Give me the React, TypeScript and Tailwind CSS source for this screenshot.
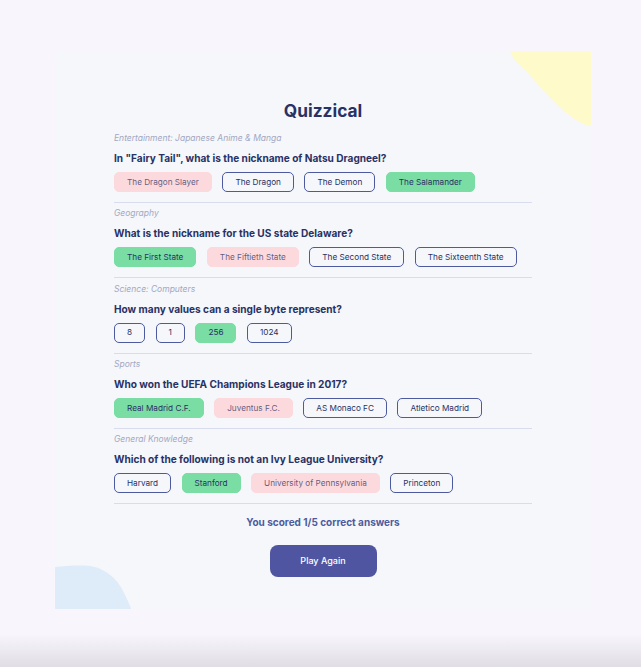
type AnswerState = "correct" | "wrong" | "idle";

type Answer = {
  text: string;
  state: AnswerState;
};

type Question = {
  category: string;
  question: string;
  answers: Answer[];
};

const questions: Question[] = [
  {
    category: "Entertainment: Japanese Anime & Manga",
    question: 'In "Fairy Tail", what is the nickname of Natsu Dragneel?',
    answers: [
      { text: "The Dragon Slayer", state: "wrong" },
      { text: "The Dragon", state: "idle" },
      { text: "The Demon", state: "idle" },
      { text: "The Salamander", state: "correct" },
    ],
  },
  {
    category: "Geography",
    question: "What is the nickname for the US state Delaware?",
    answers: [
      { text: "The First State", state: "correct" },
      { text: "The Fiftieth State", state: "wrong" },
      { text: "The Second State", state: "idle" },
      { text: "The Sixteenth State", state: "idle" },
    ],
  },
  {
    category: "Science: Computers",
    question: "How many values can a single byte represent?",
    answers: [
      { text: "8", state: "idle" },
      { text: "1", state: "idle" },
      { text: "256", state: "correct" },
      { text: "1024", state: "idle" },
    ],
  },
  {
    category: "Sports",
    question: "Who won the UEFA Champions League in 2017?",
    answers: [
      { text: "Real Madrid C.F.", state: "correct" },
      { text: "Juventus F.C.", state: "wrong" },
      { text: "AS Monaco FC", state: "idle" },
      { text: "Atletico Madrid", state: "idle" },
    ],
  },
  {
    category: "General Knowledge",
    question: "Which of the following is not an Ivy League University?",
    answers: [
      { text: "Harvard", state: "idle" },
      { text: "Stanford", state: "correct" },
      { text: "University of Pennsylvania", state: "wrong" },
      { text: "Princeton", state: "idle" },
    ],
  },
];

const answerStyles: Record<AnswerState, string> = {
  correct: "bg-[#79dda4] border-[#79dda4] text-[#293264]",
  wrong: "bg-[#fbd9dc] border-[#fbd9dc] text-[#293264]/75",
  idle: "bg-transparent border-[#4d5b9e] text-[#293264]",
};

function QuestionBlock({ item }: { item: Question }) {
  return (
    <div className="flex flex-col pt-[4.25px]">
      <p className="text-[8.5px] leading-[12px] italic text-[#a3a7c2]">{item.category}</p>
      <h2 className="mt-[7px] text-[10.1px] leading-[14px] font-bold text-[#293264]">
        {item.question}
      </h2>
      <div className="mt-[7px] flex gap-[10.5px]">
        {item.answers.map((a) => (
          <button
            key={a.text}
            className={`h-[20px] rounded-[5px] border px-[12px] text-[8.2px] leading-none ${answerStyles[a.state]}`}
          >
            {a.text}
          </button>
        ))}
      </div>
      <div className="mt-[10px] h-px bg-[#d9dcef]" />
    </div>
  );
}

export default function App() {
  return (
    <div
      className="h-[667px] w-full bg-[linear-gradient(to_bottom,#f8f6fc_0%,#f8f6fc_95%,#e0dde5_100%)] pt-[51px] pl-[55px]"
      style={{ fontFamily: "Inter, 'Noto Sans', sans-serif" }}
    >
      <div className="relative h-[558px] w-[536px] overflow-hidden bg-[#f5f7fb]">
        <svg
          className="absolute right-0 top-0 h-[75px] w-[81px]"
          viewBox="0 0 81 75"
        >
          <path
            d="M0 0 C2 6 6 11 13 17 C22 26 40 48 52 58 C62 67 72 74 81 75 L81 0 Z"
            fill="#fffac9"
          />
        </svg>
        <svg
          className="absolute bottom-0 left-0 h-[44px] w-[76px]"
          viewBox="0 0 76 44"
        >
          <path
            d="M0 2 C10 1 25 0 35 1 C50 3 62 14 68 26 C72 34 75 40 76 44 L0 44 Z"
            fill="#deebf8"
          />
        </svg>

        <div className="relative flex flex-col px-[59px] pt-[48px]">
          <h1 className="text-center text-[17.3px] leading-[24px] font-bold text-[#293264]">
            Quizzical
          </h1>
          <div className="mt-[4.75px] flex flex-col">
            {questions.map((q) => (
              <QuestionBlock key={q.question} item={q} />
            ))}
          </div>
          <p className="mt-[11px] text-center text-[10px] leading-[14px] font-bold text-[#4d5b9e]">
            You scored 1/5 correct answers
          </p>
          <div className="mt-[16px] flex justify-center">
            <button className="h-[32px] w-[107px] rounded-[8px] bg-[#4f55a0] text-[9px] font-medium text-white">
              Play Again
            </button>
          </div>
        </div>
      </div>
    </div>
  );
}
